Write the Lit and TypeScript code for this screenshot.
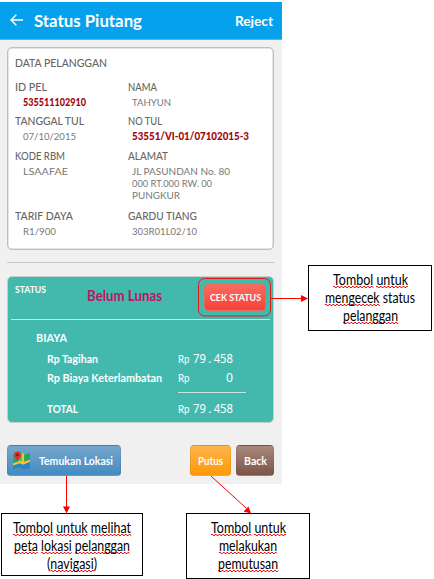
import { LitElement, html, css } from "lit";
import { customElement, property } from "lit/decorators.js";

/** One line of text, condensed or widened to fill a given width. */
@customElement("fit-text")
class FitText extends LitElement {
  @property({ type: Number }) w = 0;
  static styles = css`
    :host { display: block; white-space: pre; flex: none; }
    .inner { display: inline-block; transform-origin: 0 50%; vertical-align: top; }
  `;
  render() { return html`<span class="inner"><slot></slot></span>`; }
  firstUpdated() {
    const inner = this.renderRoot.querySelector(".inner") as HTMLElement;
    const natural = inner.getBoundingClientRect().width;
    if (this.w && natural) {
      inner.style.transform = `scaleX(${this.w / natural})`;
      this.style.width = `${this.w}px`;
    }
  }
}

type Line = [string, number];
interface Field { label: Line; lines: Line[]; strong?: boolean; }

const FIELDS: Field[] = [
  { label: ["ID PEL", 32], lines: [["535511102910", 63]], strong: true },
  { label: ["NAMA", 29], lines: [["TAHYUN", 39]] },
  { label: ["TANGGAL TUL", 69], lines: [["07/10/2015", 53]] },
  { label: ["NO TUL", 34], lines: [["53551/VI-01/07102015-3", 117]], strong: true },
  { label: ["KODE RBM", 50], lines: [["LSAAFAE", 45]] },
  { label: ["ALAMAT", 40], lines: [["JL PASUNDAN No. 80", 98], ["000 RT.000 RW. 00", 80], ["PUNGKUR", 48]] },
  { label: ["TARIF DAYA", 58], lines: [["R1/900", 33]] },
  { label: ["GARDU TIANG", 69], lines: [["303R01L02/10", 65]] },
];

/** Text between "~" marks carries a spelling squiggle. */
@customElement("note-box")
class NoteBox extends LitElement {
  @property({ attribute: false }) lines: Line[] = [];
  static styles = css`
    :host { display: flex; flex-direction: column; align-items: center; box-sizing: border-box;
      border: 1px solid #000; background: #fff; color: #000; padding-top: 5px;
      font: 14.5px/18px Lato, "Liberation Sans", sans-serif; }
    fit-text { height: 18px; }
    .bad { display: inline-block; height: 18px;
      background:
        linear-gradient(90deg, #f00 2.2px, transparent 2.2px) 0 15px / 4.4px 1px repeat-x,
        linear-gradient(90deg, #f00 2.2px, transparent 2.2px) 2.2px 16px / 4.4px 1px repeat-x; }
  `;
  render() {
    return this.lines.map(([t, w]) => html`<fit-text .w=${w}>${t.split("~").map((part, i) =>
      i % 2 ? html`<span class="bad">${part}</span>` : part)}</fit-text>`);
  }
}

@customElement("app-root")
class AppRoot extends LitElement {
  static styles = css`
    :host { display: block; position: relative; width: 434px; height: 579px; overflow: hidden;
      background: #fff; font: 11px/15px Lato, "Open Sans", sans-serif; }
    * { box-sizing: border-box; }
    .top { display: flex; height: 484px; }
    .phone { width: 282px; height: 484px; padding-top: 2px; background: linear-gradient(#fff 2px, #f0f0f0 2px); }
    header { display: flex; align-items: center; height: 38px; padding: 0 9px 0 10px; color: #fff;
      background: #05a1ec; border-bottom: 1px solid #4db9ec; font-weight: 700; }
    header svg { width: 13px; height: 12px; margin: -1px 11px 0 0; }
    header .title { font-size: 17px; line-height: 24px; }
    header .reject { margin-left: auto; font-size: 14px; line-height: 24px; }
    .data { width: 267px; height: 203px; margin: 7px 0 0 7px; padding: 7px 7px 0; background: #fff;
      border: 1px solid #bebebe; border-radius: 5px; color: #666; box-shadow: inset 0 0 0 .5px #ccc; }
    .data .heading { height: 24px; font-weight: 500; }
    .grid { display: grid; grid-template-columns: 113px 1fr; grid-template-rows: 34.3px 34.5px 60px 34px; }
    .label { height: 15.8px; font-weight: 500; }
    .value { font-size: 10.3px; line-height: 12.4px; margin-left: 8px; padding-top: 1px; color: #787878; }
    .field:nth-child(even) .value { margin-left: 4px; }
    .value fit-text { height: 12.4px; }
    .value.strong { color: #9e0610; font-weight: 900; }
    .rule { width: 267px; height: 1px; margin: 12px 0 0 7px; background: #c6c6c6; }
    .status { width: 267px; height: 147px; margin: 13px 0 0 7px; padding: 0 3px; background: #43b9ae;
      border: 1px solid #c2d0cd; border-radius: 5px; color: #fff; font-weight: 700; }
    .status-top { display: flex; height: 43px; padding-left: 4px; border-bottom: 1px solid #cfe5e2; }
    .status-top .tag { font-size: 9px; margin-top: 5px; }
    .status-top .state { margin: 8px 0 0 41px; font-size: 15px; line-height: 20px; color: #bd1561; }
    .cek { display: flex; align-items: center; justify-content: center; width: 62px; height: 27px;
      margin: 7px 4px 0 auto; border-radius: 4px; border: 1px solid #e96b5d;
      background: linear-gradient(#fc6a5f, #f5433a); font-size: 10px; }
    .fees { padding: 10px 24px 0 25px; }
    .biaya { height: 18.5px; }
    .row { display: flex; align-items: center; height: 19px; padding-left: 11px; }
    .row .amt { display: flex; justify-content: space-between; width: 55px; margin-left: auto; margin-right: 13px;
      font-weight: 400; }
    .row .num { font-family: "Noto Sans", sans-serif; font-size: 12px; }
    .dot { margin: 0 2.5px; }
    .sum { width: 68px; height: 1px; margin: 5px 0 6.5px auto; background: #c5e5e1; }
    .actions { display: flex; width: 267px; margin: 22px 0 0 7px; height: 31px; }
    .btn { display: flex; align-items: center; justify-content: center; height: 31px; border-radius: 4px;
      color: #fff; font-weight: 700; font-size: 11.5px; border: 1px solid #0001; }
    .find { width: 114px; padding: 0 7px 0 4px; justify-content: space-between;
      background: linear-gradient(#77a6cc, #438bc2); }
    .find svg { width: 19px; height: 19px; margin-top: -1px; }
    .putus { width: 41px; margin-left: auto; background: linear-gradient(#ffb44a, #ff9908); }
    .back { width: 38px; margin-left: 5px; background: linear-gradient(#ab887d, #7b5547); }
    .side { padding: 265px 0 0 26px; }
    .side note-box { width: 124px; height: 66px; }
    .bottom { display: flex; align-items: flex-start; padding: 29px 0 0 1px; }
    .bottom note-box:first-child { width: 142px; height: 63px; }
    .bottom note-box:last-child { width: 124px; height: 66px; margin-left: 43px; }
    .overlay { position: absolute; inset: 0; width: 434px; height: 579px; pointer-events: none; }
  `;

  field(f: Field) {
    return html`<div class="field">
      <fit-text class="label" .w=${f.label[1]}>${f.label[0]}</fit-text>
      <div class="value ${f.strong ? "strong" : ""}">${f.lines.map(([t, w]) => html`<fit-text .w=${w}>${t}</fit-text>`)}</div>
    </div>`;
  }

  row(label: string, w: number, num: string, nw: number) {
    return html`<div class="row"><fit-text .w=${w}>${label}</fit-text>
      <div class="amt"><fit-text .w=${11.5}>Rp</fit-text><fit-text class="num" .w=${nw}>${num.split(".").map((p, i) =>
        html`${i ? html`<span class="dot">.</span>` : ""}${p}`)}</fit-text></div></div>`;
  }

  render() {
    return html`
      <div class="top">
        <div class="phone">
          <header>
            <svg viewBox="0 0 13 12" fill="none" stroke="#fff" stroke-width="1.4"><path d="M6.300 .8 1 6l5.300 5.200M1 6h12" /></svg>
            <fit-text class="title" .w=${108}>Status Piutang</fit-text>
            <fit-text class="reject" .w=${38}>Reject</fit-text>
          </header>
          <section class="data">
            <fit-text class="heading" .w=${92}>DATA PELANGGAN</fit-text>
            <div class="grid">${FIELDS.map((f) => this.field(f))}</div>
          </section>
          <div class="rule"></div>
          <section class="status">
            <div class="status-top">
              <fit-text class="tag" .w=${31}>STATUS</fit-text>
              <fit-text class="state" .w=${75}>Belum Lunas</fit-text>
              <div class="cek"><fit-text .w=${51}>CEK STATUS</fit-text></div>
            </div>
            <div class="fees">
              <fit-text class="biaya" .w=${31}>BIAYA</fit-text>
              ${this.row("Rp Tagihan", 51, "79.458", 40)}
              ${this.row("Rp Biaya Keterlambatan", 115, "0", 7)}
              <div class="sum"></div>
              ${this.row("TOTAL", 31, "79.458", 40)}
            </div>
          </section>
          <div class="actions">
            <div class="btn find">
              <svg viewBox="0 0 19 19">
                <path d="M1 4 6 1v16l-5 1.500z" fill="#25a862" />
                <path d="m6 2 5 2v13l-5-1z" fill="#36c274" />
                <path d="m11 4 7-2v15l-7 1z" fill="#20a65e" />
                <path d="m1 14 5-2 6 1 6-3v7.500l-6 1-6-2-5 1.500z" fill="#2586d0" />
                <path d="M1 13.500 8 11l3 1.500 7-3M11 2.500v10" fill="none" stroke="#fbc02d" stroke-width="2.300" />
                <path d="M5.500 10.500C4.500 7.800 2 6.700 2 4a3.500 3.500 0 0 1 7 0c0 2.700-2.500 3.800-3.500 6.500z" fill="#d9322e" />
                <circle cx="5.500" cy="4" r="1.300" fill="#7c1818" />
              </svg>
              <fit-text .w=${74}>Temukan Lokasi</fit-text>
            </div>
            <div class="btn putus"><fit-text .w=${25}>Putus</fit-text></div>
            <div class="btn back"><fit-text .w=${23}>Back</fit-text></div>
          </div>
        </div>
        <div class="side"><note-box .lines=${[["~Tombol~ ~untuk~", 75], ["~mengecek~ status", 90], ["~pelanggan~", 55]]}></note-box></div>
      </div>
      <div class="bottom">
        <note-box .lines=${[["~Tombol~ ~untuk~ ~melihat~", 118], ["~peta~ ~lokasi~ ~pelanggan~", 116], ["(~navigasi~)", 50]]}></note-box>
        <note-box .lines=${[["~Tombol~ ~untuk~", 75], ["~melakukan~", 58], ["~pemutusan~", 60]]}></note-box>
      </div>
      <svg class="overlay" viewBox="0 0 434 579" fill="none" stroke="#f00">
        <rect x="198.500" y="278.500" width="72" height="37.500" rx="6" stroke="#e01a16" />
        <path d="M271 298.500H302M66.500 476v31M211 476l35 32" />
        <g fill="#f00" stroke="none">
          <path d="M308 298.500 301 295v7z" /><path d="M66.500 513.500 63 506.500h7z" /><path d="M251 513.500 243.500 511.500 248.500 506.500z" />
        </g>
      </svg>
    `;
  }
}
